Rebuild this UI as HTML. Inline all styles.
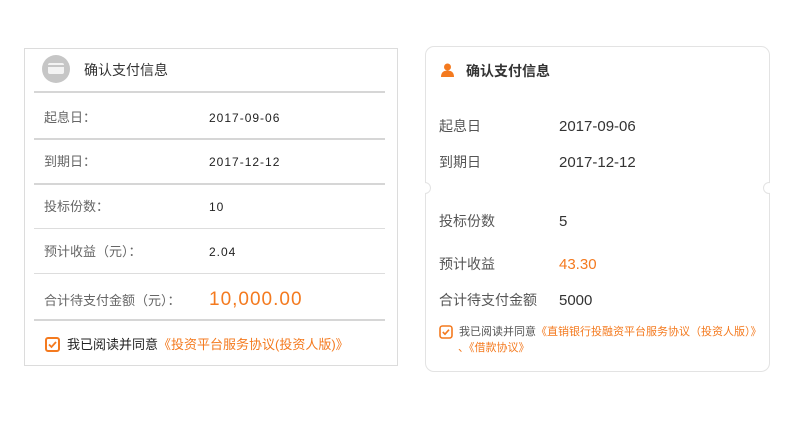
<!DOCTYPE html>
<html><head><meta charset="utf-8"><style>
*{margin:0;padding:0;box-sizing:border-box}
body{width:800px;height:424px;background:#fff;font-family:"Liberation Sans","Noto Sans CJK SC",sans-serif;position:relative;overflow:hidden}
.a{position:absolute;white-space:nowrap;line-height:1.3}
.l{left:24px;top:48px;width:374px;height:318px;border:1px solid #dcdcdc}
.hl{position:absolute;left:34px;width:351px;background:#d6d6d6}
.lab{color:#666;font-size:13px}
.val{color:#222;font-size:12px;letter-spacing:1px}
.r{left:425px;top:46px;width:345px;height:326px;border:1px solid #e3e3e3;border-radius:9px}
.rl{color:#555;font-size:14px}
.rv{color:#333;font-size:15px}
.notch{position:absolute;width:12px;height:12px;border-radius:50%;background:#fff;border:1px solid #e3e3e3;top:182px}
</style></head><body>
<div class="a l"></div>
<div class="a" style="left:42px;top:55px;width:28px;height:28px;border-radius:50%;background:#c6c6c6"></div>
<div class="a" style="left:48px;top:63px;width:16px;height:11px;border-radius:2px;background:#f3f3f3"></div>
<div class="a" style="left:48px;top:65px;width:16px;height:2px;background:#c6c6c6"></div>
<div class="a" style="left:84px;top:61px;font-size:14px;color:#333">确认支付信息</div>
<div class="hl" style="top:91px;height:2px"></div>
<div class="hl" style="top:138px;height:2px"></div>
<div class="hl" style="top:183px;height:2px"></div>
<div class="hl" style="top:228px;height:1px;background:#ddd"></div>
<div class="hl" style="top:273px;height:1px;background:#ddd"></div>
<div class="hl" style="top:319px;height:2px"></div>
<div class="a lab" style="left:44px;top:110px">起息日：</div>
<div class="a val" style="left:209px;top:111px">2017-09-06</div>
<div class="a lab" style="left:44px;top:154px">到期日：</div>
<div class="a val" style="left:209px;top:155px">2017-12-12</div>
<div class="a lab" style="left:44px;top:199px">投标份数：</div>
<div class="a val" style="left:209px;top:200px">10</div>
<div class="a lab" style="left:44px;top:244px">预计收益（元）：</div>
<div class="a val" style="left:209px;top:245px">2.04</div>
<div class="a lab" style="left:44px;top:293px">合计待支付金额（元）：</div>
<div class="a" style="left:209px;top:288px;font-size:19px;color:#f47a1f;letter-spacing:1px">10,000.00</div>
<svg class="a" style="left:45px;top:337px" width="15" height="15"><rect x="1" y="1" width="13" height="13" rx="2" fill="none" stroke="#f47a1f" stroke-width="2"/><path d="M4 7.5l2.5 2.5 4.5-5" fill="none" stroke="#f47a1f" stroke-width="1.8"/></svg>
<div class="a" style="left:67px;top:337px;font-size:13px;color:#222">我已阅读并同意<span style="color:#f47a1f">《投资平台服务协议(投资人版)》</span></div>

<div class="a r"></div>
<div class="notch" style="left:419px"></div>
<div class="notch" style="left:763px"></div>
<div class="a" style="left:418px;top:180px;width:7px;height:16px;background:#fff"></div>
<div class="a" style="left:770px;top:180px;width:8px;height:16px;background:#fff"></div>
<svg class="a" style="left:440px;top:63px" width="15" height="14"><circle cx="7.5" cy="4" r="3.5" fill="#f47a1f"/><path d="M1 14c0-5 3-6.5 6.5-6.5S14 9 14 14z" fill="#f47a1f"/></svg>
<div class="a" style="left:466px;top:62px;font-size:14px;color:#333;font-weight:bold">确认支付信息</div>
<div class="a rl" style="left:439px;top:117px">起息日</div>
<div class="a rv" style="left:559px;top:117px">2017-09-06</div>
<div class="a rl" style="left:439px;top:153px">到期日</div>
<div class="a rv" style="left:559px;top:153px">2017-12-12</div>
<div class="a rl" style="left:439px;top:212px">投标份数</div>
<div class="a rv" style="left:559px;top:212px">5</div>
<div class="a rl" style="left:439px;top:255px">预计收益</div>
<div class="a rv" style="left:559px;top:255px;color:#f47a1f">43.30</div>
<div class="a rl" style="left:439px;top:291px">合计待支付金额</div>
<div class="a rv" style="left:559px;top:291px">5000</div>
<svg class="a" style="left:439px;top:325px" width="14" height="14"><rect x="1" y="1" width="12" height="12" rx="2.5" fill="none" stroke="#f47a1f" stroke-width="1.6"/><path d="M3.8 7l2.2 2.2 4-4.5" fill="none" stroke="#f47a1f" stroke-width="1.6"/></svg>
<div class="a" style="left:459px;top:325px;font-size:11px;color:#555">我已阅读并同意<span style="color:#f47a1f">《直销银行投融资平台服务协议（投资人版）》</span></div>
<div class="a" style="left:458px;top:341px;font-size:11px;color:#f47a1f">、《借款协议》</div>
</body></html>
